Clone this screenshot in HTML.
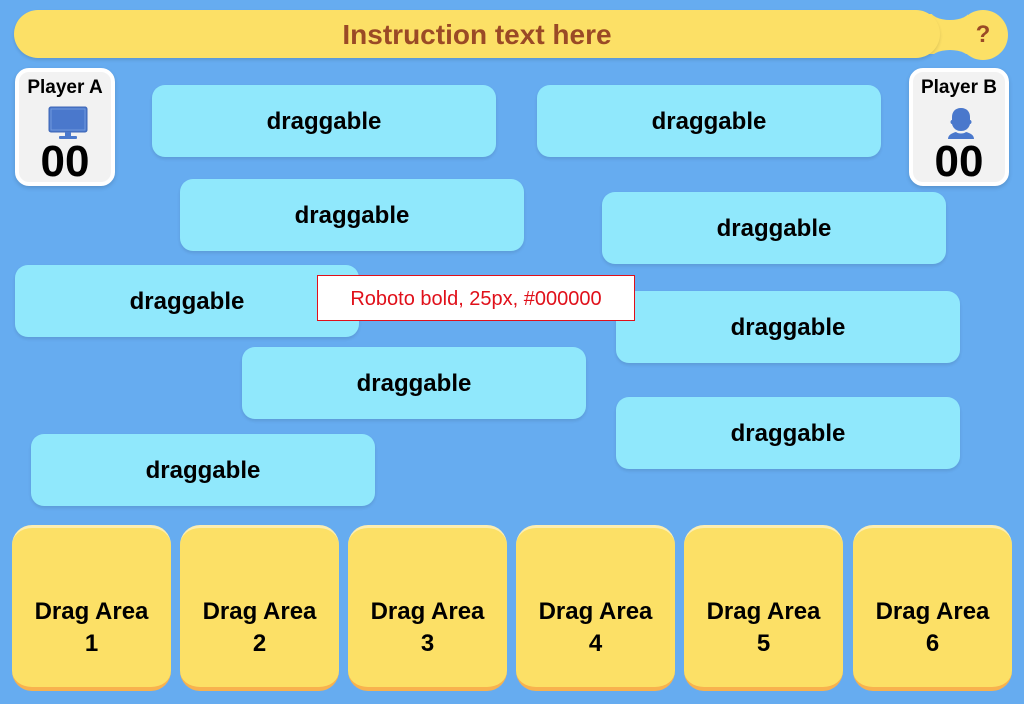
<!DOCTYPE html>
<html><head><style>
body{margin:0;width:1024px;height:704px;overflow:hidden;background:#66acf0;font-family:"Liberation Sans",sans-serif;position:relative}
.a{position:absolute}
.hdr{left:14px;top:10px;width:926px;height:48px;background:#fce066;border-radius:24px;color:#9a4a26;font-weight:bold;font-size:28px;text-align:center;line-height:50px;box-shadow:0 2px 3px rgba(0,0,0,.12)}
.q{left:958px;top:10px;width:50px;height:50px;border-radius:50%;background:#fce066;color:#9a4a26;font-weight:bold;font-size:24px;text-align:center;line-height:50px}
.neck{left:920px;top:14px;width:48px;height:40px;background:#fce066}
.nk1,.nk2{width:40px;height:20px;background:#66acf0;left:930px;border-radius:50%}
.nk1{top:0px}.nk2{top:50px}
.p{width:92px;height:110px;top:68px;background:#f2f2f2;border:4px solid #fff;border-radius:14px;text-align:center;box-shadow:0 2px 4px rgba(0,0,0,.15)}
.p .n{font-weight:bold;font-size:19px;margin-top:5px}
.p .s{font-weight:bold;font-size:44px;line-height:44px;position:absolute;left:0;right:0;top:68px}
.d{width:344px;height:72px;background:#90e8fc;border-radius:13px;font-weight:bold;font-size:24px;text-align:center;line-height:74px;box-shadow:0 2px 3px rgba(0,0,0,.1)}
.z{top:525px;width:159px;height:166px;background:#fce066;border-radius:20px;border-top:3px solid #fdeeb0;border-bottom:4px solid #f8b24e;box-sizing:border-box;font-weight:bold;font-size:24px;text-align:center;padding-top:68px;line-height:32px}
</style></head><body>
<div class="a neck"></div>
<div class="a nk1"></div><div class="a nk2"></div>
<div class="a hdr">Instruction text here</div>
<div class="a q">?</div>
<div class="a p" style="left:15px"><div class="n">Player A</div>
<svg class="a" style="left:29px;top:34px" width="40" height="34" viewBox="0 0 40 34"><rect x="1" y="1" width="38" height="25" rx="2" fill="#4a78cc" stroke="#3d66b5"/><rect x="3" y="3" width="34" height="21" fill="none" stroke="#7aa0e0" stroke-width=".8"/><rect x="17" y="26" width="6" height="4" fill="#4a78cc"/><rect x="11" y="30" width="18" height="3" rx="1" fill="#4a78cc"/></svg>
<div class="s">00</div></div>
<div class="a p" style="left:909px"><div class="n">Player B</div>
<svg class="a" style="left:33px;top:34px" width="30" height="34" viewBox="0 0 30 34"><path d="M15 2c-6 0-9 4-9 9v3c-2 0-2 4 0 4 1 4 4 7 9 7s8-3 9-7c2 0 2-4 0-4v-3c0-5-3-9-9-9z" fill="#4a78cc"/><path d="M10 26c-4 1-8 3-8 7h26c0-4-4-6-8-7-2 2-8 2-10 0z" fill="#4a78cc"/></svg>
<div class="s">00</div></div>
<div class="a d" style="left:152px;top:85px">draggable</div>
<div class="a d" style="left:537px;top:85px">draggable</div>
<div class="a d" style="left:180px;top:179px">draggable</div>
<div class="a d" style="left:602px;top:192px">draggable</div>
<div class="a d" style="left:15px;top:265px">draggable</div>
<div class="a d" style="left:616px;top:291px">draggable</div>
<div class="a d" style="left:242px;top:347px">draggable</div>
<div class="a d" style="left:616px;top:397px">draggable</div>
<div class="a d" style="left:31px;top:434px">draggable</div>
<div class="a" style="left:317px;top:275px;width:316px;height:44px;background:#fff;border:1px solid #e0101a;color:#e0101a;font-size:20px;text-align:center;line-height:46px">Roboto bold, 25px, #000000</div>
<div class="a z" style="left:12px">Drag Area<br>1</div>
<div class="a z" style="left:180px">Drag Area<br>2</div>
<div class="a z" style="left:348px">Drag Area<br>3</div>
<div class="a z" style="left:516px">Drag Area<br>4</div>
<div class="a z" style="left:684px">Drag Area<br>5</div>
<div class="a z" style="left:853px">Drag Area<br>6</div>
</body></html>
